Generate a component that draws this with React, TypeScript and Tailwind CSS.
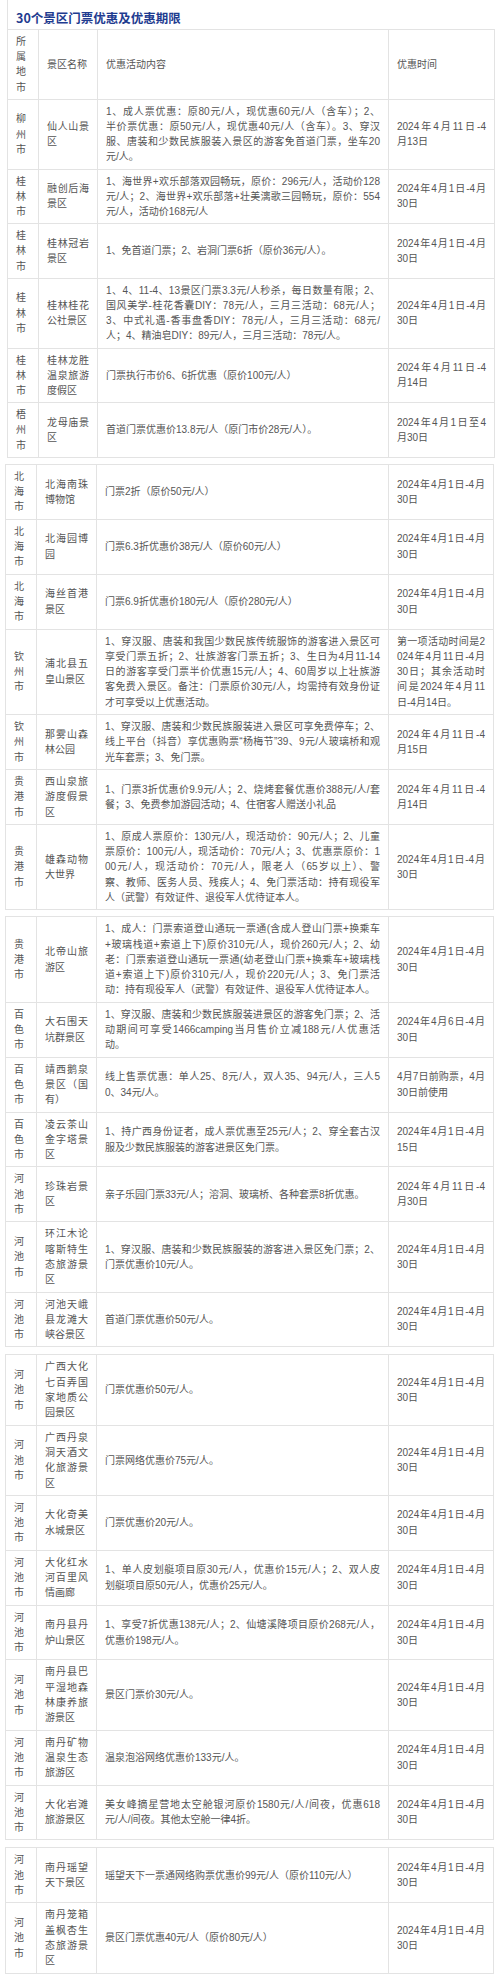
import React from "react";

type Row = { city: string; name: string[]; content: string[]; time: string[] };

const D1 = ["2024年4月1日-4月", "30日"];

const segA: Row[] = [
  { city: "所属地市", name: ["景区名称"], content: ["优惠活动内容"], time: ["优惠时间"] },
  {
    city: "柳州市",
    name: ["仙人山景", "区"],
    content: [
      "1、成人票优惠：原80元/人，现优惠60元/人（含车）；2、",
      "半价票优惠：原50元/人，现优惠40元/人（含车）。3、穿汉",
      "服、唐装和少数民族服装入景区的游客免首道门票，坐车20",
      "元/人。",
    ],
    time: ["2024年4月11日-4", "月13日"],
  },
  {
    city: "桂林市",
    name: ["融创后海", "景区"],
    content: [
      "1、海世界+欢乐部落双园畅玩，原价：296元/人，活动价128",
      "元/人；2、海世界+欢乐部落+壮美漓歌三园畅玩，原价：554",
      "元/人，活动价168元/人",
    ],
    time: D1,
  },
  {
    city: "桂林市",
    name: ["桂林冠岩", "景区"],
    content: ["1、免首道门票；2、岩洞门票6折（原价36元/人）。"],
    time: D1,
  },
  {
    city: "桂林市",
    name: ["桂林桂花", "公社景区"],
    content: [
      "1、4、11-4、13景区门票3.3元/人秒杀，每日数量有限；2、",
      "国风美学-桂花香囊DIY：78元/人，三月三活动：68元/人；",
      "3、中式礼遇-香事盘香DIY：78元/人，三月三活动：68元/",
      "人；4、精油皂DIY：89元/人，三月三活动：78元/人。",
    ],
    time: D1,
  },
  {
    city: "桂林市",
    name: ["桂林龙胜", "温泉旅游", "度假区"],
    content: ["门票执行市价6、6折优惠（原价100元/人）"],
    time: ["2024年4月11日-4", "月14日"],
  },
  {
    city: "梧州市",
    name: ["龙母庙景", "区"],
    content: ["首道门票优惠价13.8元/人（原门市价28元/人）。"],
    time: ["2024年4月1日至4", "月30日"],
  },
];

const segB: Row[] = [
  { city: "北海市", name: ["北海南珠", "博物馆"], content: ["门票2折（原价50元/人）"], time: D1 },
  { city: "北海市", name: ["北海园博", "园"], content: ["门票6.3折优惠价38元/人（原价60元/人）"], time: D1 },
  { city: "北海市", name: ["海丝首港", "景区"], content: ["门票6.9折优惠价180元/人（原价280元/人）"], time: D1 },
  {
    city: "钦州市",
    name: ["浦北县五", "皇山景区"],
    content: [
      "1、穿汉服、唐装和我国少数民族传统服饰的游客进入景区可",
      "享受门票五折；2、壮族游客门票五折；3、生日为4月11-14",
      "日的游客享受门票半价优惠15元/人；4、60周岁以上壮族游",
      "客免费入景区。备注：门票原价30元/人，均需持有效身份证",
      "才可享受以上优惠活动。",
    ],
    time: ["第一项活动时间是2", "024年4月11日-4月", "30日；其余活动时", "间是2024年4月11", "日-4月14日。"],
  },
  {
    city: "钦州市",
    name: ["那雾山森", "林公园"],
    content: [
      "1、穿汉服、唐装和少数民族服装进入景区可享免费停车；2、",
      "线上平台（抖音）享优惠购票“杨梅节”39、9元/人玻璃桥和观",
      "光车套票；3、免门票。",
    ],
    time: ["2024年4月11日-4", "月15日"],
  },
  {
    city: "贵港市",
    name: ["西山泉旅", "游度假景", "区"],
    content: [
      "1、门票3折优惠价9.9元/人；2、烧烤套餐优惠价388元/人/套",
      "餐；3、免费参加游园活动；4、住宿客人赠送小礼品",
    ],
    time: ["2024年4月11日-4", "月14日"],
  },
  {
    city: "贵港市",
    name: ["雄森动物", "大世界"],
    content: [
      "1、原成人票原价：130元/人，现活动价：90元/人；2、儿童",
      "票原价：100元/人，现活动价：70元/人；3、优惠票原价：1",
      "00元/人，现活动价：70元/人，限老人（65岁以上）、警",
      "察、教师、医务人员、残疾人；4、免门票活动：持有现役军",
      "人（武警）有效证件、退役军人优待证本人。",
    ],
    time: D1,
  },
];

const segC: Row[] = [
  {
    city: "贵港市",
    name: ["北帝山旅", "游区"],
    content: [
      "1、成人：门票索道登山通玩一票通(含成人登山门票+换乘车",
      "+玻璃栈道+索道上下)原价310元/人，现价260元/人；2、幼",
      "老：门票索道登山通玩一票通(幼老登山门票+换乘车+玻璃栈",
      "道+索道上下)原价310元/人，现价220元/人；3、免门票活",
      "动：持有现役军人（武警）有效证件、退役军人优待证本人。",
    ],
    time: D1,
  },
  {
    city: "百色市",
    name: ["大石围天", "坑群景区"],
    content: [
      "1、穿汉服、唐装和少数民族服装进景区的游客免门票；2、活",
      "动期间可享受1466camping当月售价立减188元/人优惠活",
      "动。",
    ],
    time: ["2024年4月6日-4月", "30日"],
  },
  {
    city: "百色市",
    name: ["靖西鹅泉", "景区（国", "有）"],
    content: ["线上售票优惠：单人25、8元/人，双人35、94元/人，三人5", "0、34元/人。"],
    time: ["4月7日前购票，4月", "30日前使用"],
  },
  {
    city: "百色市",
    name: ["凌云茶山", "金字塔景", "区"],
    content: ["1、持广西身份证者，成人票优惠至25元/人；2、穿全套古汉", "服及少数民族服装的游客进景区免门票。"],
    time: ["2024年4月1日-4月", "15日"],
  },
  {
    city: "河池市",
    name: ["珍珠岩景", "区"],
    content: ["亲子乐园门票33元/人；溶洞、玻璃桥、各种套票8折优惠。"],
    time: ["2024年4月11日-4", "月30日"],
  },
  {
    city: "河池市",
    name: ["环江木论", "喀斯特生", "态旅游景", "区"],
    content: ["1、穿汉服、唐装和少数民族服装的游客进入景区免门票；2、", "门票优惠价10元/人。"],
    time: D1,
  },
  {
    city: "河池市",
    name: ["河池天峨", "县龙滩大", "峡谷景区"],
    content: ["首道门票优惠价50元/人。"],
    time: D1,
  },
];

const segD: Row[] = [
  { city: "河池市", name: ["广西大化", "七百弄国", "家地质公", "园景区"], content: ["门票优惠价50元/人。"], time: D1 },
  { city: "河池市", name: ["广西丹泉", "洞天酒文", "化旅游景", "区"], content: ["门票网络优惠价75元/人。"], time: D1 },
  { city: "河池市", name: ["大化奇美", "水城景区"], content: ["门票优惠价20元/人。"], time: D1 },
  {
    city: "河池市",
    name: ["大化红水", "河百里风", "情画廊"],
    content: ["1、单人皮划艇项目原30元/人，优惠价15元/人；2、双人皮", "划艇项目原50元/人，优惠价25元/人。"],
    time: D1,
  },
  {
    city: "河池市",
    name: ["南丹县丹", "炉山景区"],
    content: ["1、享受7折优惠138元/人；2、仙塘溪降项目原价268元/人，", "优惠价198元/人。"],
    time: D1,
  },
  { city: "河池市", name: ["南丹县巴", "平湿地森", "林康养旅", "游景区"], content: ["景区门票价30元/人。"], time: D1 },
  { city: "河池市", name: ["南丹矿物", "温泉生态", "旅游区"], content: ["温泉泡浴网络优惠价133元/人。"], time: D1 },
  {
    city: "河池市",
    name: ["大化岩滩", "旅游景区"],
    content: ["美女峰摘星营地太空舱银河原价1580元/人/间夜，优惠618", "元/人/间夜。其他太空舱一律4折。"],
    time: D1,
  },
];

const segE: Row[] = [
  {
    city: "河池市",
    name: ["南丹瑶望", "天下景区"],
    content: ["瑶望天下一票通网络购票优惠价99元/人（原价110元/人）"],
    time: D1,
  },
  {
    city: "河池市",
    name: ["南丹笼箱", "盖枫杏生", "态旅游景", "区"],
    content: ["景区门票优惠40元/人（原价80元/人）"],
    time: D1,
  },
];

function Lines({ lines }: { lines: string[] }) {
  return (
    <>
      {lines.map((l, i) => (
        <div key={i} className={i < lines.length - 1 ? "text-justify [text-align-last:justify]" : "text-left"}>
          {l}
        </div>
      ))}
    </>
  );
}

const td = "border border-[#e3e3e3] px-[8px] pt-[4px] pb-[4px] align-middle";

function Segment({ rows, variant }: { rows: Row[]; variant: "a" | "b" }) {
  const isA = variant === "a";
  return (
    <table
      className={
        isA
          ? "table-fixed border-collapse w-[487px] ml-[7px] leading-[15.2px]"
          : "table-fixed border-collapse w-[488px] ml-[5px] leading-[15.3px]"
      }
    >
      <colgroup>
        <col className="w-[31px]" />
        <col className={isA ? "w-[59px]" : "w-[60px]"} />
        <col className={isA ? "w-[291px]" : "w-[292px]"} />
        <col className={isA ? "w-[106px]" : "w-[105px]"} />
      </colgroup>
      <tbody>
        {rows.map((r, i) => (
          <tr key={i}>
            <td className={td}>
              <Lines lines={r.city.split("")} />
            </td>
            <td className={td}>
              <Lines lines={r.name} />
            </td>
            <td className={td}>
              <Lines lines={r.content} />
            </td>
            <td className={td}>
              <Lines lines={r.time} />
            </td>
          </tr>
        ))}
      </tbody>
    </table>
  );
}

export default function App() {
  return (
    <div className="w-[500px] min-h-[1975px] bg-white text-[10px] text-[#555555] [font-family:'Liberation_Sans','Noto_Sans_CJK_SC',sans-serif]">
      <div className="ml-[7px] w-[487px] h-[29px] box-border border-l border-[#e3e3e3] pl-[8px] pt-[10px]">
        <h1 className="text-[12.5px] leading-[16px] font-bold text-[#1f3c90] [font-family:'Noto_Sans_CJK_SC',sans-serif]">
          30个景区门票优惠及优惠期限
        </h1>
      </div>
      <Segment rows={segA} variant="a" />
      <div className="h-[6px]" />
      <Segment rows={segB} variant="b" />
      <div className="h-[6px]" />
      <Segment rows={segC} variant="b" />
      <div className="h-[7px]" />
      <Segment rows={segD} variant="b" />
      <div className="h-[7px]" />
      <Segment rows={segE} variant="b" />
    </div>
  );
}
